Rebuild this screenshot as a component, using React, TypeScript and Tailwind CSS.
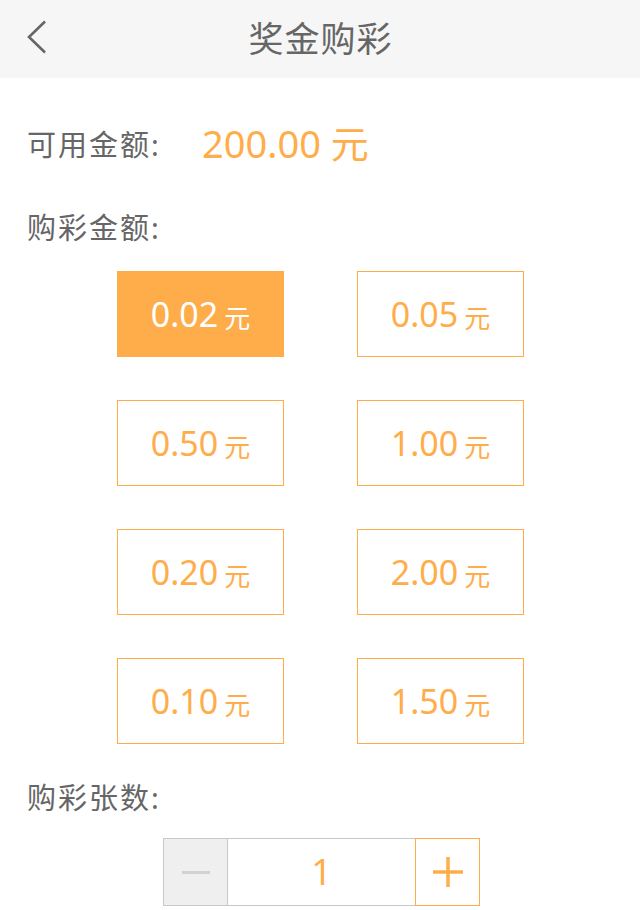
import React, { useState } from 'react';

const amounts = ['0.02', '0.05', '0.50', '1.00', '0.20', '2.00', '0.10', '1.50'];

const App = () => {
  const [selected, setSelected] = useState('0.02');
  const [count, setCount] = useState(1);

  return (
    <div className="w-[640px] h-[910px] bg-white overflow-hidden font-['Noto_Sans','Noto_Sans_CJK_SC',sans-serif]">
      {/* Header */}
      <div className="relative h-[78px] bg-[#f6f6f6] flex items-center justify-center">
        <button className="absolute left-[26px] top-[20px] w-[24px] h-[34px] flex items-center">
          <svg width="22" height="34" viewBox="0 0 22 34" fill="none">
            <path d="M19 1.5 L3 17 L19 32.5" stroke="#666" strokeWidth="2.6" />
          </svg>
        </button>
        <h1 className="text-[35px] text-[#666] tracking-[1px] leading-none pl-[1px] -mt-[2px]">奖金购彩</h1>
      </div>

      {/* Balance */}
      <div className="flex items-center h-[48px] mt-[42px] pl-[27px]">
        <span className="text-[29px] leading-none text-[#666] tracking-[2px] w-[175px]">可用金额:</span>
        <span className="text-[38px] leading-none text-[#ffad4a] -mt-[2px]">200.00 元</span>
      </div>

      {/* Amount label */}
      <div className="mt-[40px] pl-[27px] text-[29px] text-[#666] tracking-[2px] leading-[40px]">购彩金额:</div>

      {/* Amount grid */}
      <div className="mt-[23px] ml-[117px] grid grid-cols-[167px_167px] gap-x-[73px] gap-y-[43px]">
        {amounts.map((a) => {
          const active = a === selected;
          return (
            <button
              key={a}
              onClick={() => setSelected(a)}
              className={
                active
                  ? 'h-[86px] bg-[#ffad4a] border border-[#ffad4a] text-white flex items-center justify-center'
                  : 'h-[86px] bg-white border border-[#ffad4a] text-[#ffad4a] flex items-center justify-center'
              }
            >
              <span className="text-[34px] leading-none">{a}</span>
              <span className="text-[26px] leading-none ml-[6px] mt-[8px]">元</span>
            </button>
          );
        })}
      </div>

      {/* Count label */}
      <div className="mt-[34px] pl-[27px] text-[29px] text-[#666] tracking-[2px] leading-[40px]">购彩张数:</div>

      {/* Stepper */}
      <div className="mt-[20px] ml-[163px] w-[317px] h-[68px] flex">
        <button
          onClick={() => setCount(Math.max(1, count - 1))}
          className="w-[65px] h-full bg-[#efefef] border border-[#c8c8c8] flex items-center justify-center"
        >
          <span className="block w-[28px] h-[3px] bg-[#d2d2d2]"></span>
        </button>
        <div className="flex-1 h-full border-y border-[#c8c8c8] flex items-center justify-center text-[36px] leading-none text-[#ffad4a]">
          {count}
        </div>
        <button
          onClick={() => setCount(count + 1)}
          className="w-[65px] h-full border border-[#ffad4a] flex items-center justify-center"
        >
          <svg width="30" height="30" viewBox="0 0 30 30">
            <path d="M0 15 H30 M15 0 V30" stroke="#ffad4a" strokeWidth="3.5" />
          </svg>
        </button>
      </div>
    </div>
  );
};

export default App;
